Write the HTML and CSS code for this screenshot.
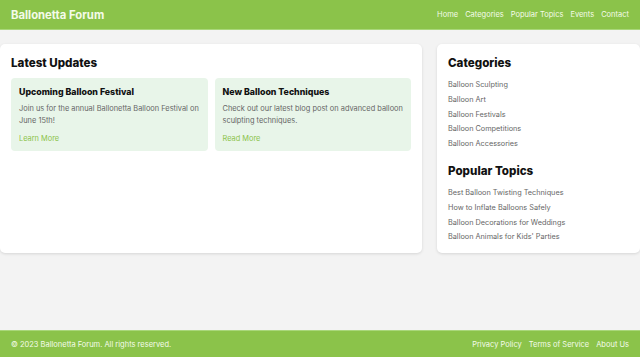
FILE: index.html
```html
<!DOCTYPE html>
<html lang="en">
<head>
    <meta charset="UTF-8">
    <meta name="viewport" content="width=device-width, initial-scale=1.0">
    <title>Ballonetta Forum</title>
    <link rel="stylesheet" href="styles.css">
</head>
<body>
    <header class="site-header">
        <div class="logo">Ballonetta Forum</div>
        <nav class="nav">
            <a href="#">Home</a>
            <a href="#">Categories</a>
            <a href="#">Popular Topics</a>
            <a href="#">Events</a>
            <a href="#">Contact</a>
        </nav>
    </header>

    <main class="main">
        <section class="panel updates">
            <h2>Latest Updates</h2>
            <div class="update-list">
                <div class="update">
                    <h3>Upcoming Balloon Festival</h3>
                    <p>Join us for the annual Ballonetta Balloon Festival on June 15th!</p>
                    <a href="#">Learn More</a>
                </div>
                <div class="update">
                    <h3>New Balloon Techniques</h3>
                    <p>Check out our latest blog post on advanced balloon sculpting techniques.</p>
                    <a href="#">Read More</a>
                </div>
            </div>
        </section>

        <aside class="panel sidebar">
            <h2>Categories</h2>
            <ul class="links">
                <li><a href="#">Balloon Sculpting</a></li>
                <li><a href="#">Balloon Art</a></li>
                <li><a href="#">Balloon Festivals</a></li>
                <li><a href="#">Balloon Competitions</a></li>
                <li><a href="#">Balloon Accessories</a></li>
            </ul>
            <h2>Popular Topics</h2>
            <ul class="links">
                <li><a href="#">Best Balloon Twisting Techniques</a></li>
                <li><a href="#">How to Inflate Balloons Safely</a></li>
                <li><a href="#">Balloon Decorations for Weddings</a></li>
                <li><a href="#">Balloon Animals for Kids' Parties</a></li>
            </ul>
        </aside>
    </main>

    <footer class="site-footer">
        <p>&copy; 2023 Ballonetta Forum. All rights reserved.</p>
        <nav class="nav">
            <a href="#">Privacy Policy</a>
            <a href="#">Terms of Service</a>
            <a href="#">About Us</a>
        </nav>
    </footer>
</body>
</html>
```

FILE: styles.css
```css
body {
    font-family: Inter, "Noto Sans", sans-serif;
    display: flex;
    flex-direction: column;
    min-height: 100vh;
    margin: 0;
    background-color: #f3f3f3;
    color: #222;
}
a {
    text-decoration: none;
}
.site-header {
    display: flex;
    align-items: center;
    justify-content: space-between;
    height: 29px;
    padding: 0 11px;
    background-color: #8bc34a;
    border-bottom: 1px solid #a9d77a;
}
.logo {
    color: #f4fbe9;
    font-size: 11.3px;
    font-weight: 700;
}
.nav {
    display: flex;
    gap: 7px;
}
.nav a {
    color: #f4fbe9;
    font-size: 7.5px;
}
.main {
    flex: 1;
    display: grid;
    grid-template-columns: 422px 1fr;
    gap: 15px;
    align-items: start;
    padding-top: 14px;
}
.panel {
    background: white;
    border-radius: 5px;
    box-shadow: 0 1px 3px rgba(0, 0, 0, 0.12);
    padding: 12px 11px 11px;
    height: 186px;
}
.panel h2 {
    margin: 0 0 8px;
    font-size: 11.6px;
    font-weight: 800;
    color: #111;
    line-height: 14px;
}
.update-list {
    display: grid;
    grid-template-columns: 1fr 1fr;
    gap: 7px;
}
.update {
    background: #e8f5e9;
    border-radius: 4px;
    padding: 8px 8px 7px;
}
.update h3 {
    margin: 0 0 6px;
    font-size: 8.8px;
    font-weight: 800;
    color: #111;
    line-height: 11px;
}
.update p {
    margin: 0 0 7px;
    font-size: 7.42px;
    line-height: 12px;
    color: #666;
}
.update a {
    display: block;
    font-size: 7.4px;
    line-height: 10px;
    color: #8bc34a;
}
.links {
    list-style: none;
    margin: 0 0 12px;
    padding: 0;
}
.links li {
    font-size: 7.3px;
    line-height: 14.8px;
}
.links a {
    color: #666;
}
.site-footer {
    display: flex;
    align-items: center;
    justify-content: space-between;
    height: 26px;
    padding: 0 11px;
    background-color: #8bc34a;
    border-top: 1px solid #a9d77a;
}
.site-footer p {
    margin: 0;
    color: #f4fbe9;
    font-size: 7.5px;
}
```
